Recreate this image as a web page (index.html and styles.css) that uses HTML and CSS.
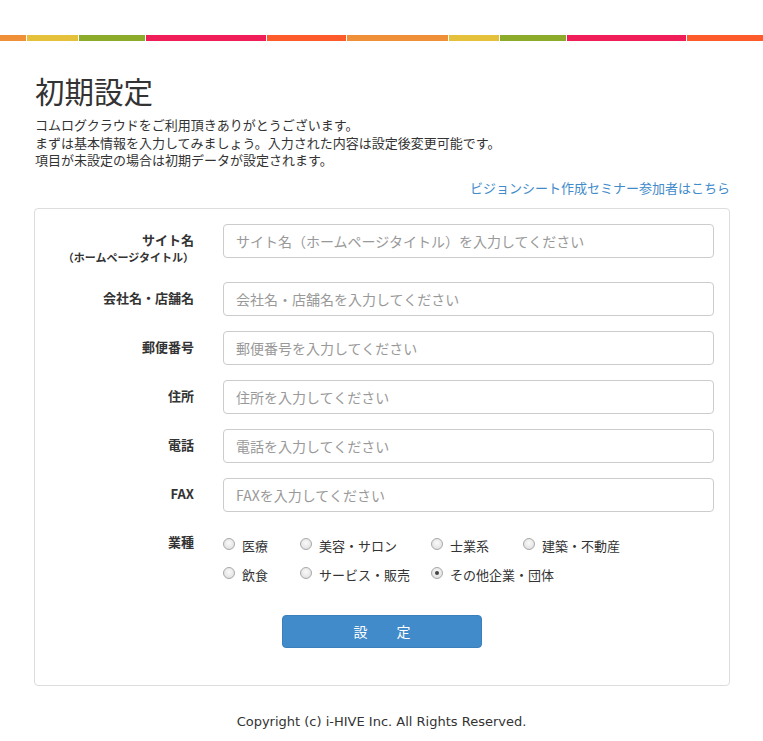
FILE: index.html
```html
<!DOCTYPE html>
<html lang="ja">
<head>
<meta charset="utf-8">
<title>初期設定</title>
<link rel="stylesheet" href="styles.css">
</head>
<body>
<div class="colorbar">
  <span class="seg or"></span><span class="seg ye"></span><span class="seg gr"></span><span class="seg pk"></span><span class="seg rd"></span><span class="seg or"></span><span class="seg ye"></span><span class="seg gr"></span><span class="seg pk"></span><span class="seg rd"></span>
</div>
<div class="container">
  <h1 class="title">初期設定</h1>
  <p class="intro">コムログクラウドをご利用頂きありがとうございます。<br>まずは基本情報を入力してみましょう。入力された内容は設定後変更可能です。<br>項目が未設定の場合は初期データが設定されます。</p>
  <div class="linkrow"><a class="seminar" href="#">ビジョンシート作成セミナー参加者はこちら</a></div>
  <form class="panel">
    <div class="row row-first">
      <div class="label"><span class="main">サイト名</span><span class="sub">（ホームページタイトル）</span></div>
      <input class="field" type="text" placeholder="サイト名（ホームページタイトル）を入力してください">
    </div>
    <div class="row">
      <div class="label"><span class="main">会社名・店舗名</span></div>
      <input class="field" type="text" placeholder="会社名・店舗名を入力してください">
    </div>
    <div class="row">
      <div class="label"><span class="main">郵便番号</span></div>
      <input class="field" type="text" placeholder="郵便番号を入力してください">
    </div>
    <div class="row">
      <div class="label"><span class="main">住所</span></div>
      <input class="field" type="text" placeholder="住所を入力してください">
    </div>
    <div class="row">
      <div class="label"><span class="main">電話</span></div>
      <input class="field" type="text" placeholder="電話を入力してください">
    </div>
    <div class="row">
      <div class="label"><span class="main">FAX</span></div>
      <input class="field" type="text" placeholder="FAXを入力してください">
    </div>
    <div class="row row-industry">
      <div class="label label-industry"><span class="main">業種</span></div>
      <div class="radios">
        <label class="radio"><input type="radio" name="ind">医療</label>
        <label class="radio"><input type="radio" name="ind">美容・サロン</label>
        <label class="radio"><input type="radio" name="ind">士業系</label>
        <label class="radio"><input type="radio" name="ind">建築・不動産</label>
        <label class="radio"><input type="radio" name="ind">飲食</label>
        <label class="radio"><input type="radio" name="ind">サービス・販売</label>
        <label class="radio"><input type="radio" name="ind" checked>その他企業・団体</label>
      </div>
    </div>
    <div class="actions">
      <button class="submit" type="button">設　定</button>
    </div>
  </form>
  <footer class="footer">Copyright (c) i-HIVE Inc. All Rights Reserved.</footer>
</div>
</body>
</html>
```
FILE: styles.css
```css
html, body {
  margin: 0;
  padding: 0;
  background: #fff;
}
body {
  font-family: "Noto Sans CJK JP", "Noto Sans", sans-serif;
  color: #333;
  font-size: 13px;
}
.colorbar {
  margin-top: 35px;
  height: 6px;
  display: flex;
  gap: 1px;
  background: #fff;
}
.seg { display: block; height: 6px; flex: none; }
.seg.or { background: #ef8f37; }
.seg.ye { background: #e5c13b; }
.seg.gr { background: #8dab2a; }
.seg.pk { background: #f01e58; }
.seg.rd { background: #fd5b2c; }
.seg:nth-child(1) { width: 26px; }
.seg:nth-child(2) { width: 51px; }
.seg:nth-child(3) { width: 66px; }
.seg:nth-child(4) { width: 120px; }
.seg:nth-child(5) { width: 79px; }
.seg:nth-child(6) { width: 101px; }
.seg:nth-child(7) { width: 50px; }
.seg:nth-child(8) { width: 66px; }
.seg:nth-child(9) { width: 119px; }
.seg:nth-child(10) { flex: 1; }

.container {
  width: 696px;
  margin: 0 0 0 34px;
}
.title {
  margin: 31px 0 0 1px;
  font-size: 29.5px;
  line-height: 36px;
  font-weight: normal;
  color: #333;
}
.intro {
  margin: 8px 0 0 1px;
  font-size: 13px;
  line-height: 17.5px;
}
.linkrow {
  margin-top: 10px;
  text-align: right;
  line-height: 18px;
}
.seminar {
  color: #428bca;
  text-decoration: none;
  font-size: 13px;
}
.panel {
  margin-top: 11px;
  border: 1px solid #ddd;
  border-radius: 4px;
  padding: 15px 15px 37px 0;
}
.row {
  display: flex;
  gap: 29px;
  margin-bottom: 15px;
}
.row-first { margin-bottom: 16px; }
.label {
  width: 159px;
  flex: none;
  text-align: right;
  font-weight: bold;
  display: flex;
  flex-direction: column;
  padding-top: 7px;
}
.label .main {
  font-size: 13px;
  line-height: 17px;
}
.label .sub {
  font-size: 11px;
  line-height: 18px;
}
.field {
  box-sizing: border-box;
  width: 491px;
  height: 34px;
  margin: 0;
  padding: 0 12px;
  border: 1px solid #ccc;
  border-radius: 4px;
  font-family: "Noto Sans CJK JP", "Noto Sans", sans-serif;
  font-size: 14px;
  color: #555;
  background: #fff;
  outline: none;
}
.field::placeholder { color: #999; }

.row-industry { margin-bottom: 0; }
.label-industry { padding-top: 5px; }
.label-industry .main { line-height: 20px; }
.radios {
  display: grid;
  grid-template-columns: 77px 131px 92px auto;
  padding-top: 4px;
}
.radio {
  display: flex;
  align-items: center;
  height: 29px;
  font-size: 13px;
  color: #333;
  white-space: nowrap;
}
.radio input {
  appearance: none;
  -webkit-appearance: none;
  box-sizing: border-box;
  width: 12px;
  height: 12px;
  margin: 0 7px 3px 0;
  border: 1px solid #a8a8a8;
  border-radius: 50%;
  background: radial-gradient(circle at 50% 40%, #fafafa 0%, #e4e4e4 70%, #d0d0d0 100%);
  flex: none;
  position: relative;
}
.radio input:checked::after {
  content: "";
  position: absolute;
  left: 3px;
  top: 3px;
  width: 4px;
  height: 4px;
  border-radius: 50%;
  background: #444;
}
.actions {
  display: flex;
  justify-content: center;
  margin-top: 26px;
  padding-left: 15px;
}
.submit {
  width: 200px;
  height: 33px;
  background: #428bca;
  border: 1px solid #3a80bd;
  border-radius: 4px;
  color: #fff;
  font-family: "Noto Sans CJK JP", sans-serif;
  font-size: 14px;
  letter-spacing: 7.5px;
  padding: 0 0 0 7.5px;
}
.footer {
  margin-top: 26px;
  text-align: center;
  font-family: "DejaVu Sans", sans-serif;
  font-size: 13px;
  line-height: 20px;
  color: #333;
  width: 763px;
  margin-left: -34px;
}
```
